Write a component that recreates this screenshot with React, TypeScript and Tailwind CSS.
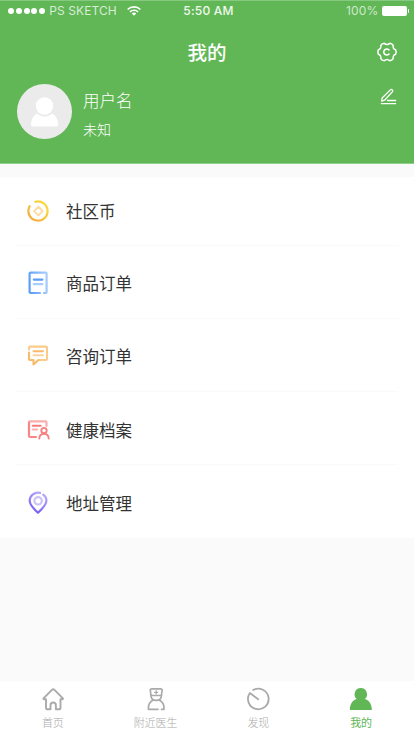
import type { ReactNode } from "react";

const menu = [
  { label: "社区币", icon: CoinIcon, row: "h-[69px] pb-px" },
  { label: "商品订单", icon: OrderIcon, row: "h-[73px] pt-[2px]" },
  { label: "咨询订单", icon: ChatIcon, row: "h-[73px] pt-px" },
  { label: "健康档案", icon: RecordIcon, row: "h-[73px] pt-[4px]" },
  { label: "地址管理", icon: PinIcon, row: "h-[73px] pt-[2px]" },
];

const tabs = [
  { label: "首页", icon: HomeIcon },
  { label: "附近医生", icon: DoctorIcon },
  { label: "发现", icon: DiscoverIcon },
  { label: "我的", icon: MineIcon, active: true },
];

function Svg({ children }: { children: ReactNode }) {
  return (
    <svg viewBox="0 0 24 24" className="w-6 h-6 shrink-0" fill="none" strokeWidth="2" strokeLinecap="round" strokeLinejoin="round">
      {children}
    </svg>
  );
}

function CoinIcon() {
  return (
    <Svg>
      <defs>
        <linearGradient id="coin" x1="0" y1="1" x2="1" y2="0">
          <stop offset="0" stopColor="#f5a63c" />
          <stop offset="1" stopColor="#fbe03d" />
        </linearGradient>
      </defs>
      <path d="M9.3 2.8A9.6 9.6 0 1 1 3.7 7.2" stroke="url(#coin)" strokeWidth="2.2" />
      <path d="M12.4 7.8l4.3 4.3-4.3 4.3-4.3-4.3z" stroke="#fbdda4" strokeWidth="2" />
    </Svg>
  );
}

function OrderIcon() {
  return (
    <Svg>
      <defs>
        <linearGradient id="order" x1="0" y1="0.6" x2="1" y2="0.4">
          <stop offset="0" stopColor="#5b9ef8" />
          <stop offset="1" stopColor="#a5ccfd" />
        </linearGradient>
      </defs>
      <path d="M14 22H4.6a1 1 0 0 1-1-1V2.6a1 1 0 0 1 1-1h15a1 1 0 0 1 1 1V21a1 1 0 0 1-1 1H18" stroke="url(#order)" strokeWidth="2.2" />
      <path d="M7.8 8.6h8.6" stroke="#5b9ef8" strokeWidth="2.2" />
      <path d="M7.8 13.2h8.6" stroke="#a9cefc" strokeWidth="2.2" />
    </Svg>
  );
}

function ChatIcon() {
  return (
    <Svg>
      <path d="M3 5.500V3.600a1 1 0 0 1 1-1h16a1 1 0 0 1 1 1V15a1 1 0 0 1-1 1h-7" stroke="#fbcb8c" strokeWidth="2.1" />
      <path d="M3 8.500V15a1 1 0 0 0 1 1h3.500v4.500L12.500 16" stroke="#f9ba6a" strokeWidth="2.1" />
      <path d="M7.500 7.300h9.500" stroke="#f9ba6a" />
      <path d="M7.500 11.300h9.500" stroke="#fbd3a0" />
    </Svg>
  );
}

function RecordIcon() {
  return (
    <Svg>
      <path d="M20.500 8V4.600a1.200 1.200 0 0 0-1.200-1.200H4.200A1.200 1.200 0 0 0 3 4.600" stroke="#fbaeae" strokeWidth="2.2" />
      <path d="M3 4.600v13.200A1.200 1.200 0 0 0 4.200 19H10" stroke="#f98585" strokeWidth="2.2" />
      <path d="M6.700 7.800h8" stroke="#f87c7c" />
      <path d="M6.700 11.500h4.500" stroke="#fbb0b0" />
      <circle cx="18" cy="12.600" r="2.700" stroke="#f98080" strokeWidth="1.900" />
      <path d="M13.300 20.500c.2-3 2.200-4.600 4.700-4.600s4.500 1.600 4.700 4.600" stroke="#f98080" strokeWidth="1.900" />
    </Svg>
  );
}

function PinIcon() {
  return (
    <Svg>
      <defs>
        <linearGradient id="pin" x1="0" y1="1" x2="0.5" y2="0">
          <stop offset="0" stopColor="#6b50f5" />
          <stop offset="1" stopColor="#b5a4fb" />
        </linearGradient>
      </defs>
      <path d="M17.300 3.700c2 1.500 3.300 3.700 3.100 6.300-.3 3.800-4 7.700-8.400 11.700C7.500 17.700 4 13.800 3.700 10A8.300 8.300 0 0 1 14 1.900" stroke="url(#pin)" strokeWidth="2.2" />
      <circle cx="12.100" cy="9.800" r="3.700" stroke="#cbc1fb" strokeWidth="2.2" />
    </Svg>
  );
}

function HomeIcon() {
  return (
    <Svg>
      <path d="M5 12.300H3.200c-.8 0-1-.6-.5-1.100L11.200 2.700a1.500 1.500 0 0 1 2 0l8.500 8.500c.5.500.3 1.100-.5 1.100h-1.700v8.400a1.600 1.600 0 0 1-1.600 1.600h-3v-4.100a2.700 2.700 0 0 0-5.400 0v4.100H6.600A1.600 1.600 0 0 1 5 20.700z" stroke="currentColor" strokeWidth="1.900" />
    </Svg>
  );
}

function DoctorIcon() {
  return (
    <Svg>
      <g stroke="currentColor" strokeWidth="1.700">
        <path d="M7 8.500L6.300 3.400a1.300 1.300 0 0 1 1.300-1.500h9.200a1.300 1.300 0 0 1 1.300 1.500l-.7 5.100z" />
        <path d="M7 8.500c0 3.200 2.200 4.900 5.200 4.900s5.200-1.700 5.200-4.900" />
        <path d="M12.200 3.700v3.200M10.600 5.300h3.200" strokeWidth="1.200" />
        <path d="M14 22.300H4.400c-.4-4.700 1.600-7.600 4.800-9.200M15.200 13.100c3.200 1.600 5.200 4.500 4.800 9.200h-2.500" />
      </g>
    </Svg>
  );
}

function DiscoverIcon() {
  return (
    <Svg>
      <path d="M7.200 3A10.300 10.300 0 1 1 3.900 6L12.200 12.200" stroke="currentColor" strokeWidth="1.800" />
    </Svg>
  );
}

function MineIcon() {
  return (
    <Svg>
      <path d="M11.800 1a6.300 6.300 0 0 1 4 11.100c4.100.9 6.900 4.700 7.100 10.900H.8c.2-6.200 2.900-10 7-10.900A6.300 6.300 0 0 1 11.800 1z" fill="currentColor" />
    </Svg>
  );
}

function StatusBar() {
  return (
    <div className="h-5 border-t border-[#86c981] pl-2 pr-[5px] grid grid-cols-3 items-center font-['Inter'] text-[12px] leading-none">
      <div className="flex items-center whitespace-nowrap">
        <div className="flex gap-[1.800px]">
          {[0, 1, 2, 3, 4].map((i) => <span key={i} className="w-[6px] h-[6px] rounded-full bg-white" />)}
        </div>
        <span className="ml-1 text-white/75 tracking-[0.100px]">PS SKETCH</span>
        <svg viewBox="0 0 14 10" className="ml-[10px] w-[14px] h-[10px]" fill="none" stroke="white" strokeWidth="1.600">
          <path d="M.6 3.500a9.200 9.200 0 0 1 12.800 0M2.900 5.800a6 6 0 0 1 8.200 0" />
          <path d="M4.800 7.600a3.200 3.200 0 0 1 4.400 0L7 9.800z" fill="white" stroke="none" />
        </svg>
      </div>
      <span className="text-center text-white/90 font-medium tracking-[0.200px]">5:50 AM</span>
      <div className="flex items-center justify-end">
        <span className="text-white/70 tracking-[0.200px]">100%</span>
        <span className="ml-[3px] w-[25px] h-[10px] rounded-[2px] bg-white" />
        <span className="ml-px w-[1.500px] h-1 rounded-r-full bg-white" />
      </div>
    </div>
  );
}

export default function App() {
  return (
    <div className="w-[414px] h-[736px] flex flex-col bg-[#fafafa] overflow-hidden font-['Noto_Sans_CJK_SC',sans-serif]">
      <header className="h-[164px] shrink-0 bg-[#61b756] border-b border-[#8fce88] text-white">
        <StatusBar />
        <div className="h-[63px] pl-[31px] pr-4 flex items-center">
          <h1 className="flex-1 pl-[1px] text-center text-[19.500px] font-medium leading-none">我的</h1>
          <svg viewBox="0 0 22 22" className="-ml-[6px] w-[22px] h-[22px]" fill="none" stroke="white" strokeWidth="1.500" strokeLinecap="round" strokeLinejoin="round">
            <path d="M8.300 2.200c.9 1 1.700 1.300 2.700 1.300s1.800-.3 2.700-1.300c1.600.1 2.700.8 3.500 2.100-.4 2.400.4 3.800 2.500 4.500.6 1.500.6 2.900 0 4.400-2.100.7-2.900 2.100-2.500 4.500-.8 1.300-1.900 2-3.500 2.100-.9-1-1.700-1.300-2.700-1.300s-1.800.3-2.700 1.300c-1.600-.1-2.700-.8-3.500-2.100.4-2.400-.4-3.800-2.500-4.500-.6-1.500-.6-2.900 0-4.400 2.100-.7 2.900-2.100 2.500-4.500.8-1.300 1.900-2 3.500-2.100z" />
            <path d="M13 9a3 3 0 1 0 0 4" strokeWidth="1.600" />
          </svg>
        </div>
        <div className="pl-[17px] pr-[17px] flex items-start">
          <div className="w-[55px] h-[55px] mt-[0.500px] rounded-full bg-[#ebebeb]">
            <svg viewBox="0 0 55 55" fill="white">
              <circle cx="27.500" cy="22" r="8.700" />
              <path d="M19.700 29.400c4.600 4.100 11 4.100 15.600 0 3.600 2.200 5.700 6.200 5.900 11 0 1.300-.7 2.100-2 2.100H16c-1.300 0-2-.8-2-2.100.2-4.800 2.100-8.800 5.700-11z" />
            </svg>
          </div>
          <div className="ml-[11px] pt-[8px] flex-1 font-light">
            <p className="text-[16.500px] leading-[18px]">用户名</p>
            <p className="mt-[12px] text-[14px] leading-4">未知</p>
          </div>
          <svg viewBox="0 0 17 17" className="mt-[5px] w-[17px] h-[17px]" fill="none" stroke="white" strokeWidth="1.300" strokeLinecap="round" strokeLinejoin="round">
            <path d="M1.700 13l.4-3L10.300 1.900a1.400 1.400 0 0 1 2 0 1.400 1.400 0 0 1 0 2L4.600 12.200z" />
            <path d="M7.500 12.500h8.200M1.300 15.600h14.400" />
          </svg>
        </div>
      </header>

      <main className="mt-[13px] bg-white">
        {menu.map((m, i) => (
          <div key={m.label} className="px-4">
            <div className={`flex items-center pl-[10px] ${m.row} ${i < menu.length - 1 ? "border-b border-[#fafafa]" : ""}`}>
              <m.icon />
              <span className="ml-4 text-[16.500px] leading-6 text-[#333333]">{m.label}</span>
            </div>
          </div>
        ))}
      </main>

      {/* Tab bar */}
      <nav className="mt-auto h-[55px] bg-white px-[1.500px] grid grid-cols-4">
        {tabs.map((t) => (
          <div key={t.label} className={`flex flex-col items-center pt-[6px] ${t.active ? "text-[#61b756]" : "text-[#aaaaaa]"}`}>
            <t.icon />
            <span className={`mt-[3px] text-[11px] leading-4 ${t.active ? "" : "font-light"}`}>{t.label}</span>
          </div>
        ))}
      </nav>
    </div>
  );
}
